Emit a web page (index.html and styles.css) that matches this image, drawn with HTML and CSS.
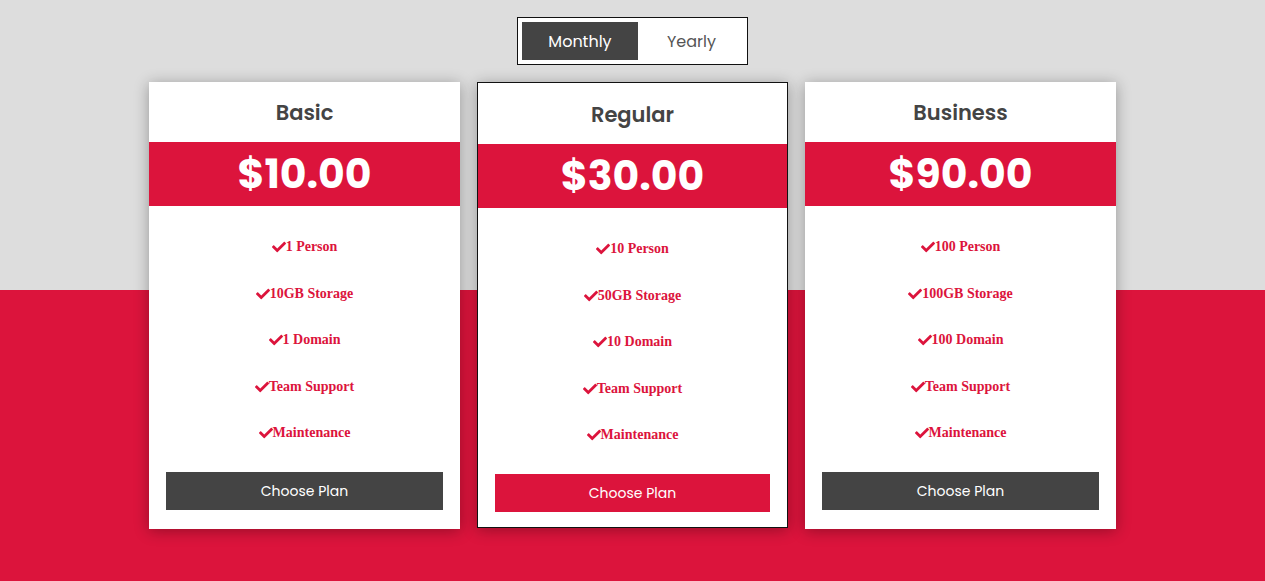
FILE: index.html
```html
<!DOCTYPE html>
<html lang="en">
<head>
<meta charset="utf-8">
<title>Pricing</title>
<link rel="stylesheet" href="styles.css">
</head>
<body>
<div class="page">
  <div class="toggle-row">
    <div class="toggle">
      <button class="toggle-btn active">Monthly</button>
      <button class="toggle-btn">Yearly</button>
    </div>
  </div>
  <div class="cards">
    <div class="card">
      <div class="card-title">Basic</div>
      <div class="card-price">$10.00</div>
      <ul class="features">
        <li><svg class="check" viewBox="0 0 512 512"><path d="M173.898 439.404l-166.4-166.4c-9.997-9.997-9.997-26.206 0-36.204l36.203-36.204c9.997-9.998 26.207-9.998 36.204 0L192 312.69 432.095 72.596c9.997-9.997 26.207-9.997 36.204 0l36.203 36.204c9.997 9.997 9.997 26.206 0 36.204l-294.4 294.401c-9.998 9.997-26.207 9.997-36.204-.001z"/></svg>1 Person</li>
        <li><svg class="check" viewBox="0 0 512 512"><path d="M173.898 439.404l-166.4-166.4c-9.997-9.997-9.997-26.206 0-36.204l36.203-36.204c9.997-9.998 26.207-9.998 36.204 0L192 312.69 432.095 72.596c9.997-9.997 26.207-9.997 36.204 0l36.203 36.204c9.997 9.997 9.997 26.206 0 36.204l-294.4 294.401c-9.998 9.997-26.207 9.997-36.204-.001z"/></svg>10GB Storage</li>
        <li><svg class="check" viewBox="0 0 512 512"><path d="M173.898 439.404l-166.4-166.4c-9.997-9.997-9.997-26.206 0-36.204l36.203-36.204c9.997-9.998 26.207-9.998 36.204 0L192 312.69 432.095 72.596c9.997-9.997 26.207-9.997 36.204 0l36.203 36.204c9.997 9.997 9.997 26.206 0 36.204l-294.4 294.401c-9.998 9.997-26.207 9.997-36.204-.001z"/></svg>1 Domain</li>
        <li><svg class="check" viewBox="0 0 512 512"><path d="M173.898 439.404l-166.4-166.4c-9.997-9.997-9.997-26.206 0-36.204l36.203-36.204c9.997-9.998 26.207-9.998 36.204 0L192 312.69 432.095 72.596c9.997-9.997 26.207-9.997 36.204 0l36.203 36.204c9.997 9.997 9.997 26.206 0 36.204l-294.4 294.401c-9.998 9.997-26.207 9.997-36.204-.001z"/></svg>Team Support</li>
        <li><svg class="check" viewBox="0 0 512 512"><path d="M173.898 439.404l-166.4-166.4c-9.997-9.997-9.997-26.206 0-36.204l36.203-36.204c9.997-9.998 26.207-9.998 36.204 0L192 312.69 432.095 72.596c9.997-9.997 26.207-9.997 36.204 0l36.203 36.204c9.997 9.997 9.997 26.206 0 36.204l-294.4 294.401c-9.998 9.997-26.207 9.997-36.204-.001z"/></svg>Maintenance</li>
      </ul>
      <button class="choose">Choose Plan</button>
    </div>
    <div class="card featured">
      <div class="card-title">Regular</div>
      <div class="card-price">$30.00</div>
      <ul class="features">
        <li><svg class="check" viewBox="0 0 512 512"><path d="M173.898 439.404l-166.4-166.4c-9.997-9.997-9.997-26.206 0-36.204l36.203-36.204c9.997-9.998 26.207-9.998 36.204 0L192 312.69 432.095 72.596c9.997-9.997 26.207-9.997 36.204 0l36.203 36.204c9.997 9.997 9.997 26.206 0 36.204l-294.4 294.401c-9.998 9.997-26.207 9.997-36.204-.001z"/></svg>10 Person</li>
        <li><svg class="check" viewBox="0 0 512 512"><path d="M173.898 439.404l-166.4-166.4c-9.997-9.997-9.997-26.206 0-36.204l36.203-36.204c9.997-9.998 26.207-9.998 36.204 0L192 312.69 432.095 72.596c9.997-9.997 26.207-9.997 36.204 0l36.203 36.204c9.997 9.997 9.997 26.206 0 36.204l-294.4 294.401c-9.998 9.997-26.207 9.997-36.204-.001z"/></svg>50GB Storage</li>
        <li><svg class="check" viewBox="0 0 512 512"><path d="M173.898 439.404l-166.4-166.4c-9.997-9.997-9.997-26.206 0-36.204l36.203-36.204c9.997-9.998 26.207-9.998 36.204 0L192 312.69 432.095 72.596c9.997-9.997 26.207-9.997 36.204 0l36.203 36.204c9.997 9.997 9.997 26.206 0 36.204l-294.4 294.401c-9.998 9.997-26.207 9.997-36.204-.001z"/></svg>10 Domain</li>
        <li><svg class="check" viewBox="0 0 512 512"><path d="M173.898 439.404l-166.4-166.4c-9.997-9.997-9.997-26.206 0-36.204l36.203-36.204c9.997-9.998 26.207-9.998 36.204 0L192 312.69 432.095 72.596c9.997-9.997 26.207-9.997 36.204 0l36.203 36.204c9.997 9.997 9.997 26.206 0 36.204l-294.4 294.401c-9.998 9.997-26.207 9.997-36.204-.001z"/></svg>Team Support</li>
        <li><svg class="check" viewBox="0 0 512 512"><path d="M173.898 439.404l-166.4-166.4c-9.997-9.997-9.997-26.206 0-36.204l36.203-36.204c9.997-9.998 26.207-9.998 36.204 0L192 312.69 432.095 72.596c9.997-9.997 26.207-9.997 36.204 0l36.203 36.204c9.997 9.997 9.997 26.206 0 36.204l-294.4 294.401c-9.998 9.997-26.207 9.997-36.204-.001z"/></svg>Maintenance</li>
      </ul>
      <button class="choose choose-red">Choose Plan</button>
    </div>
    <div class="card">
      <div class="card-title">Business</div>
      <div class="card-price">$90.00</div>
      <ul class="features">
        <li><svg class="check" viewBox="0 0 512 512"><path d="M173.898 439.404l-166.4-166.4c-9.997-9.997-9.997-26.206 0-36.204l36.203-36.204c9.997-9.998 26.207-9.998 36.204 0L192 312.69 432.095 72.596c9.997-9.997 26.207-9.997 36.204 0l36.203 36.204c9.997 9.997 9.997 26.206 0 36.204l-294.4 294.401c-9.998 9.997-26.207 9.997-36.204-.001z"/></svg>100 Person</li>
        <li><svg class="check" viewBox="0 0 512 512"><path d="M173.898 439.404l-166.4-166.4c-9.997-9.997-9.997-26.206 0-36.204l36.203-36.204c9.997-9.998 26.207-9.998 36.204 0L192 312.69 432.095 72.596c9.997-9.997 26.207-9.997 36.204 0l36.203 36.204c9.997 9.997 9.997 26.206 0 36.204l-294.4 294.401c-9.998 9.997-26.207 9.997-36.204-.001z"/></svg>100GB Storage</li>
        <li><svg class="check" viewBox="0 0 512 512"><path d="M173.898 439.404l-166.4-166.4c-9.997-9.997-9.997-26.206 0-36.204l36.203-36.204c9.997-9.998 26.207-9.998 36.204 0L192 312.69 432.095 72.596c9.997-9.997 26.207-9.997 36.204 0l36.203 36.204c9.997 9.997 9.997 26.206 0 36.204l-294.4 294.401c-9.998 9.997-26.207 9.997-36.204-.001z"/></svg>100 Domain</li>
        <li><svg class="check" viewBox="0 0 512 512"><path d="M173.898 439.404l-166.4-166.4c-9.997-9.997-9.997-26.206 0-36.204l36.203-36.204c9.997-9.998 26.207-9.998 36.204 0L192 312.69 432.095 72.596c9.997-9.997 26.207-9.997 36.204 0l36.203 36.204c9.997 9.997 9.997 26.206 0 36.204l-294.4 294.401c-9.998 9.997-26.207 9.997-36.204-.001z"/></svg>Team Support</li>
        <li><svg class="check" viewBox="0 0 512 512"><path d="M173.898 439.404l-166.4-166.4c-9.997-9.997-9.997-26.206 0-36.204l36.203-36.204c9.997-9.998 26.207-9.998 36.204 0L192 312.69 432.095 72.596c9.997-9.997 26.207-9.997 36.204 0l36.203 36.204c9.997 9.997 9.997 26.206 0 36.204l-294.4 294.401c-9.998 9.997-26.207 9.997-36.204-.001z"/></svg>Maintenance</li>
      </ul>
      <button class="choose">Choose Plan</button>
    </div>
  </div>
</div>
</body>
</html>
```
FILE: styles.css
```css
* { box-sizing: border-box; }
html, body { margin: 0; padding: 0; }
body {
  height: 581px;
  overflow: hidden;
  background: linear-gradient(#dddddd 0, #dddddd 290px, #dc143c 290px, #dc143c 100%);
  font-family: "Poppins", "Inter", "Open Sans", sans-serif;
}
.page { padding-top: 17px; }
.toggle-row { display: flex; justify-content: center; }
.toggle {
  display: flex;
  width: 231px;
  height: 48px;
  padding: 4px;
  background: #fff;
  border: 1px solid #111;
}
.toggle-btn {
  font-family: inherit;
  font-size: 16px;
  border: 0;
  background: transparent;
  color: #555;
  padding: 0;
  cursor: pointer;
}
.toggle-btn.active { width: 116px; background: #444; color: #fff; }
.toggle-btn:not(.active) { flex: 1; padding-left: 2px; }
.cards {
  display: flex;
  justify-content: center;
  gap: 17px;
  margin-top: 17px;
}
.card {
  width: 311px;
  height: 447px;
  background: #fff;
  box-shadow: 0 2px 14px rgba(0, 0, 0, 0.32);
  display: flex;
  flex-direction: column;
}
.card.featured { border: 1px solid #111; height: 446px; padding-top: 1px; }
.card-title {
  height: 60px;
  display: flex;
  align-items: center;
  justify-content: center;
  font-size: 21px;
  font-weight: 600;
  color: #444;
}
.featured .card-title { padding-top: 1px; }
.card-price {
  height: 64px;
  background: #dc143c;
  color: #fff;
  display: flex;
  align-items: center;
  justify-content: center;
  font-size: 41px;
  font-weight: 700;
  padding-bottom: 1px;
}
.features {
  list-style: none;
  margin: 0;
  padding: 33px 0 0;
  display: flex;
  flex-direction: column;
  gap: 30.5px;
}
.features li {
  height: 16px;
  line-height: 16px;
  display: flex;
  justify-content: center;
  align-items: center;
  font-family: "Liberation Serif", "Times New Roman", serif;
  font-weight: 700;
  font-size: 14px;
  color: #dc143c;
}
.check { width: 14px; height: 14px; fill: #dc143c; margin-right: 0; }
.choose {
  margin: 31px 17px 0;
  height: 38px;
  border: 0;
  background: #444;
  color: #fff;
  font-family: inherit;
  font-size: 14px;
  cursor: pointer;
}
.choose-red { background: #dc143c; }
```
